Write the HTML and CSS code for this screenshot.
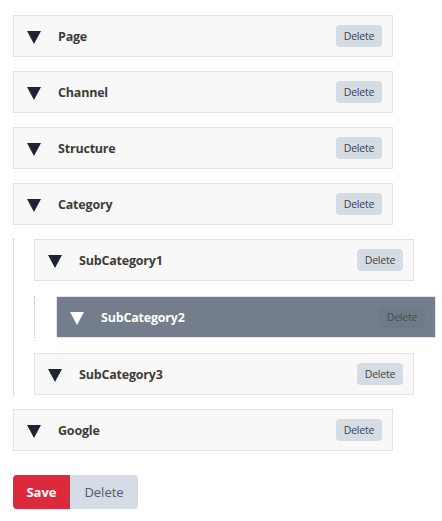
FILE: index.html
```html
<!DOCTYPE html>
<html>
<head>
<meta charset="utf-8">
<link rel="stylesheet" href="styles.css">
</head>
<body>
<div class="tree">
  <div class="node">
    <div class="row"><span class="tri"></span><span class="label">Page</span><button class="del">Delete</button></div>
  </div>
  <div class="node">
    <div class="row"><span class="tri"></span><span class="label">Channel</span><button class="del">Delete</button></div>
  </div>
  <div class="node">
    <div class="row"><span class="tri"></span><span class="label">Structure</span><button class="del">Delete</button></div>
  </div>
  <div class="node">
    <div class="row"><span class="tri"></span><span class="label">Category</span><button class="del">Delete</button></div>
    <div class="children">
      <div class="node">
        <div class="row"><span class="tri"></span><span class="label">SubCategory1</span><button class="del">Delete</button></div>
        <div class="children">
          <div class="node">
            <div class="row selected"><span class="tri"></span><span class="label">SubCategory2</span><button class="del">Delete</button></div>
          </div>
        </div>
      </div>
      <div class="node">
        <div class="row"><span class="tri"></span><span class="label">SubCategory3</span><button class="del">Delete</button></div>
      </div>
    </div>
  </div>
  <div class="node">
    <div class="row"><span class="tri"></span><span class="label">Google</span><button class="del">Delete</button></div>
  </div>
</div>
<div class="actions">
  <button class="save">Save</button><button class="delete-all">Delete</button>
</div>
</body>
</html>
```
FILE: styles.css
```css
* { box-sizing: border-box; }
body {
  margin: 0;
  padding: 15px 13px 0 13px;
  font-family: "Open Sans", "Noto Sans", sans-serif;
  background: #fff;
  color: #3a3a3a;
}
.tree { display: flex; flex-direction: column; gap: 14px; }
.node { display: flex; flex-direction: column; gap: 14px; }
.children .node { gap: 15px; }
.children {
  display: flex;
  flex-direction: column;
  gap: 15px;
  border-left: 1px dotted #b8b8b8;
  padding-left: 20px;
}
.children .children { padding-left: 21px; }
.row {
  width: 380px;
  height: 42px;
  display: flex;
  align-items: center;
  background: #f8f8f8;
  border: 1px solid #e3e3e3;
  padding: 0 10px 0 13px;
}
.tri {
  width: 0; height: 0;
  border-left: 7px solid transparent;
  border-right: 7px solid transparent;
  border-top: 13px solid #1e2530;
  margin-right: 17px;
  margin-top: 2px;
}
.label {
  flex: 1;
  font-weight: 700;
  font-size: 12.5px;
  color: #3c3c3c;
  letter-spacing: -0.2px;
}
.del {
  height: 22px;
  width: 46px;
  border: none;
  border-radius: 4px;
  background: #d6dce4;
  color: #3a3f46;
  font-family: inherit;
  font-size: 10.5px;
  padding: 0;
  letter-spacing: -0.2px;
}
.row.selected {
  background: #737d8b;
  border-color: #e6e6e6;
  border-left: 1px solid #e8e8e8;
}
.row.selected .tri { border-top-color: #ffffff; }
.row.selected .label { color: #ffffff; }
.row.selected .del { background: #6f7a88; color: #454c55; }
.actions {
  display: flex;
  margin-top: 24px;
}
.actions button {
  height: 34px;
  border: none;
  font-family: inherit;
  font-size: 13px;
  padding: 0;
}
.save {
  width: 57px;
  background: #dc2a3b;
  color: #fff;
  font-weight: 700;
  border-radius: 4px 0 0 4px;
}
.delete-all {
  width: 68px;
  background: #d6dce5;
  color: #555b63;
  border-radius: 0 4px 4px 0;
}
```
